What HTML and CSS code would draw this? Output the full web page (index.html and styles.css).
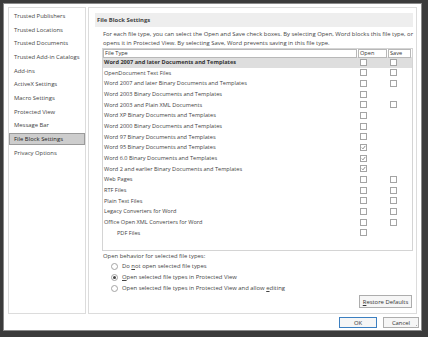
FILE: index.html
```html
<html>
    <head>
        <meta charset="UTF-8">
        <link rel="stylesheet" href="styles.css">
    </head>
    <body>
        <div class="frame">
          <div class="dialog">
            <div class="main">
              <div class="sidebar">
                <div class="nav-item">Trusted Publishers</div>
                <div class="nav-item">Trusted Locations</div>
                <div class="nav-item">Trusted Documents</div>
                <div class="nav-item">Trusted Add-in Catalogs</div>
                <div class="nav-item">Add-ins</div>
                <div class="nav-item">ActiveX Settings</div>
                <div class="nav-item">Macro Settings</div>
                <div class="nav-item">Protected View</div>
                <div class="nav-item">Message Bar</div>
                <div class="nav-item active">File Block Settings</div>
                <div class="nav-item">Privacy Options</div>
              </div>

              <div class="panel">
                <div class="panel-title">File Block Settings</div>
                <p class="intro">For each file type, you can select the Open and Save check boxes. By selecting Open, Word blocks this file type, or<br>opens it in Protected View. By selecting Save, Word prevents saving in this file type.</p>

                <div class="filetable">
                  <div class="row head">
                    <div class="cell">File Type</div>
                    <div class="cell">Open</div>
                    <div class="cell">Save</div>
                  </div>
                  <div class="row selected"><div class="name">Word 2007 and later Documents and Templates</div><div class="col"><span class="box"></span></div><div class="col"><span class="box"></span></div></div>
                  <div class="row"><div class="name">OpenDocument Text Files</div><div class="col"><span class="box"></span></div><div class="col"><span class="box"></span></div></div>
                  <div class="row"><div class="name">Word 2007 and later Binary Documents and Templates</div><div class="col"><span class="box"></span></div><div class="col"><span class="box"></span></div></div>
                  <div class="row"><div class="name">Word 2003 Binary Documents and Templates</div><div class="col"><span class="box"></span></div><div class="col"></div></div>
                  <div class="row"><div class="name">Word 2003 and Plain XML Documents</div><div class="col"><span class="box"></span></div><div class="col"><span class="box"></span></div></div>
                  <div class="row"><div class="name">Word XP Binary Documents and Templates</div><div class="col"><span class="box"></span></div><div class="col"></div></div>
                  <div class="row"><div class="name">Word 2000 Binary Documents and Templates</div><div class="col"><span class="box"></span></div><div class="col"></div></div>
                  <div class="row"><div class="name">Word 97 Binary Documents and Templates</div><div class="col"><span class="box"></span></div><div class="col"></div></div>
                  <div class="row"><div class="name">Word 95 Binary Documents and Templates</div><div class="col"><span class="box"><svg viewBox="0 0 5 5"><path d="M0.8 2.6 L2 3.8 L4.3 0.9"/></svg></span></div><div class="col"></div></div>
                  <div class="row"><div class="name">Word 6.0 Binary Documents and Templates</div><div class="col"><span class="box"><svg viewBox="0 0 5 5"><path d="M0.8 2.6 L2 3.8 L4.3 0.9"/></svg></span></div><div class="col"></div></div>
                  <div class="row"><div class="name">Word 2 and earlier Binary Documents and Templates</div><div class="col"><span class="box"><svg viewBox="0 0 5 5"><path d="M0.8 2.6 L2 3.8 L4.3 0.9"/></svg></span></div><div class="col"></div></div>
                  <div class="row"><div class="name">Web Pages</div><div class="col"><span class="box"></span></div><div class="col"><span class="box"></span></div></div>
                  <div class="row"><div class="name">RTF Files</div><div class="col"><span class="box"></span></div><div class="col"><span class="box"></span></div></div>
                  <div class="row"><div class="name">Plain Text Files</div><div class="col"><span class="box"></span></div><div class="col"><span class="box"></span></div></div>
                  <div class="row"><div class="name">Legacy Converters for Word</div><div class="col"><span class="box"></span></div><div class="col"><span class="box"></span></div></div>
                  <div class="row"><div class="name">Office Open XML Converters for Word</div><div class="col"><span class="box"></span></div><div class="col"><span class="box"></span></div></div>
                  <div class="row"><div class="name sub">PDF Files</div><div class="col"><span class="box"></span></div><div class="col"></div></div>
                </div>

                <p class="group-label">Open behavior for selected file types:</p>
                <div class="radio"><span class="dot"></span><span>Do <u>n</u>ot open selected file types</span></div>
                <div class="radio"><span class="dot on"></span><span><u>O</u>pen selected file types in Protected View</span></div>
                <div class="radio"><span class="dot"></span><span>Open selected file types in Protected View and allow <u>e</u>diting</span></div>

                <div class="restore-row">
                  <button class="btn restore"><u>R</u>estore Defaults</button>
                </div>
              </div>
            </div>

            <div class="footer">
              <button class="btn ok">OK</button>
              <button class="btn cancel">Cancel</button>
            </div>

            <svg class="grip" viewBox="0 0 6 6">
              <rect x="4" y="0" width="1" height="1"/>
              <rect x="2" y="2" width="1" height="1"/>
              <rect x="4" y="2" width="1" height="1"/>
              <rect x="0" y="4" width="1" height="1"/>
              <rect x="2" y="4" width="1" height="1"/>
              <rect x="4" y="4" width="1" height="1"/>
            </svg>
          </div>
        </div>
    </body>
</html>
```

FILE: styles.css
```css
html, body {
    margin: 0;
    height: 100%;
}

body {
    background: #3b3b3b;
    font-family: "Open Sans", "Noto Sans", sans-serif;
    font-size: 5.9px;
    color: #444;
}

.frame {
    box-sizing: border-box;
    height: 337px;
    padding: 3px 6px 6px 3px;
}

.dialog {
    position: relative;
    box-sizing: border-box;
    height: 100%;
    background: #fff;
    border: 1px solid #8a8a8a;
    padding: 3px 4px 2px 4px;
    display: flex;
    flex-direction: column;
}

.main {
    flex: 1;
    display: flex;
    gap: 2px;
    min-height: 0;
}

/* left list */
.sidebar {
    width: 78px;
    box-sizing: border-box;
    border: 1px solid #dcdcdc;
    padding-top: 2px;
}

.nav-item {
    box-sizing: border-box;
    height: 12px;
    line-height: 10px;
    margin-bottom: 1.67px;
    padding-left: 4px;
    border: 1px solid transparent;
    white-space: nowrap;
}

.nav-item.active {
    background: #cdcdcd;
    border-color: #9a9a9a;
    color: #222;
}

/* right side */
.panel {
    flex: 1;
    min-width: 0;
    overflow: hidden;
    box-sizing: border-box;
    border: 1px solid #dcdcdc;
    padding: 5px 3px 0 6px;
    display: flex;
    flex-direction: column;
}

.panel-title {
    height: 14px;
    line-height: 14px;
    background: #eeeeee;
    padding-left: 2px;
    font-weight: bold;
    color: #444;
}

.intro {
    margin: 3px 0 0 8px;
    line-height: 9px;
    white-space: nowrap;
}

.filetable {
    margin-left: 7px;
    width: 311px;
    height: 203px;
    box-sizing: border-box;
    border: 1px solid #d4d4d4;
    font-size: 5.6px;
}

.row {
    display: grid;
    grid-template-columns: 255px 30px 24px;
    height: 10.67px;
    line-height: 10.67px;
    white-space: nowrap;
}

.row.head {
    height: 8px;
    line-height: 7px;
    color: #333;
}

.row.head .cell {
    box-sizing: border-box;
    border: 1px solid #b8b8b8;
    padding-left: 1px;
    margin-right: 1px;
}

.row.selected {
    background: #dedede;
    font-weight: bold;
    color: #333;
}

.name {
    padding-left: 1px;
}

.name.sub {
    padding-left: 14px;
}

.col {
    display: flex;
    align-items: center;
    padding-left: 1.5px;
}

.box {
    box-sizing: border-box;
    width: 7px;
    height: 7px;
    border: 1px solid #a4a4a4;
    background: #fff;
    display: flex;
}

.box svg {
    width: 5px;
    height: 5px;
}

.box path {
    fill: none;
    stroke: #707070;
    stroke-width: 0.8;
}

.group-label {
    margin: 1px 0 0 8px;
    line-height: 9px;
}

.radio {
    height: 11px;
    line-height: 11px;
    display: flex;
    align-items: center;
    padding-left: 15.5px;
    gap: 4.5px;
    white-space: nowrap;
}

.dot {
    box-sizing: border-box;
    width: 7px;
    height: 7px;
    border: 1px solid #a4a4a4;
    border-radius: 50%;
    display: flex;
    align-items: center;
    justify-content: center;
}

.dot.on::after {
    content: "";
    width: 3px;
    height: 3px;
    border-radius: 50%;
    background: #444;
}

.restore-row {
    display: flex;
    justify-content: flex-end;
    margin: 1px 1px 0 0;
}

.btn {
    font-family: inherit;
    font-size: 5.9px;
    color: #333;
    background: #f6f6f6;
    border: 1px solid #adadad;
    padding: 0;
    margin: 0;
}

.restore {
    width: 53px;
    height: 13px;
}

.footer {
    display: flex;
    justify-content: flex-end;
    gap: 6px;
    padding-top: 3px;
    margin-right: -2px;
}

.ok {
    width: 38px;
    height: 11px;
    border-color: #3c7fc0;
}

.cancel {
    width: 36px;
    height: 11px;
}

.grip {
    position: absolute;
    right: 1px;
    bottom: 1px;
    width: 6px;
    height: 6px;
    fill: #b0b0b0;
}
```
